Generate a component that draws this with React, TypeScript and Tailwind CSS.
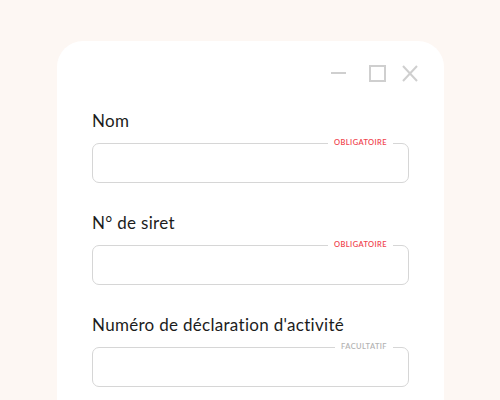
import React from 'react'

const FIELDS = [
  { label: 'Nom', tag: 'OBLIGATOIRE', required: true },
  { label: 'N° de siret', tag: 'OBLIGATOIRE', required: true },
  { label: "Numéro de déclaration d'activité", tag: 'FACULTATIF', required: false },
]

function Field({ label, tag, required }: { label: string; tag: string; required: boolean }) {
  return (
    <div className="flex flex-col">
      <label className="text-[17px] leading-[20px] text-[#1c1c1c] tracking-[0.3px]">{label}</label>
      <div className="relative mt-[12px] h-[40px] rounded-[7px] border border-[#d6d6d6]">
        {/* tag sits on the border line */}
        <span
          className={
            'absolute -top-[6px] right-[15px] bg-white px-[6px] text-[7.5px] leading-[10px] font-semibold tracking-[0.4px] ' +
            (required ? 'text-[#f0454f]' : 'text-[#b3b3b3]')
          }
        >
          {tag}
        </span>
      </div>
    </div>
  )
}

export default function App() {
  return (
    <div
      className="w-[500px] h-[400px] overflow-hidden bg-[#fdf7f3] pt-[41px] pl-[57px]"
      style={{ fontFamily: 'Lato, "Noto Sans", sans-serif' }}
    >
      <div className="w-[387px] h-[400px] rounded-t-[26px] bg-white px-[35px] pt-[24px]">
        {/* window controls */}
        <div className="flex justify-end items-center h-[17px] -mr-[9px]">
          <svg width="15" height="17" viewBox="0 0 15 17">
            <line x1="0" y1="8" x2="15" y2="8" stroke="#cfcfcf" strokeWidth="2" />
          </svg>
          <svg width="17" height="17" viewBox="0 0 17 17" className="ml-[23px]">
            <rect x="1" y="1" width="15" height="15" fill="none" stroke="#cfcfcf" strokeWidth="2" />
          </svg>
          <svg width="16" height="17" viewBox="0 0 16 17" className="ml-[16px]">
            <line x1="1" y1="1" x2="15" y2="16" stroke="#cfcfcf" strokeWidth="2" />
            <line x1="15" y1="1" x2="1" y2="16" stroke="#cfcfcf" strokeWidth="2" />
          </svg>
        </div>
        <div className="mt-[29px] flex flex-col gap-[30px]">
          {FIELDS.map(f => (
            <Field key={f.label} {...f} />
          ))}
        </div>
      </div>
    </div>
  )
}
